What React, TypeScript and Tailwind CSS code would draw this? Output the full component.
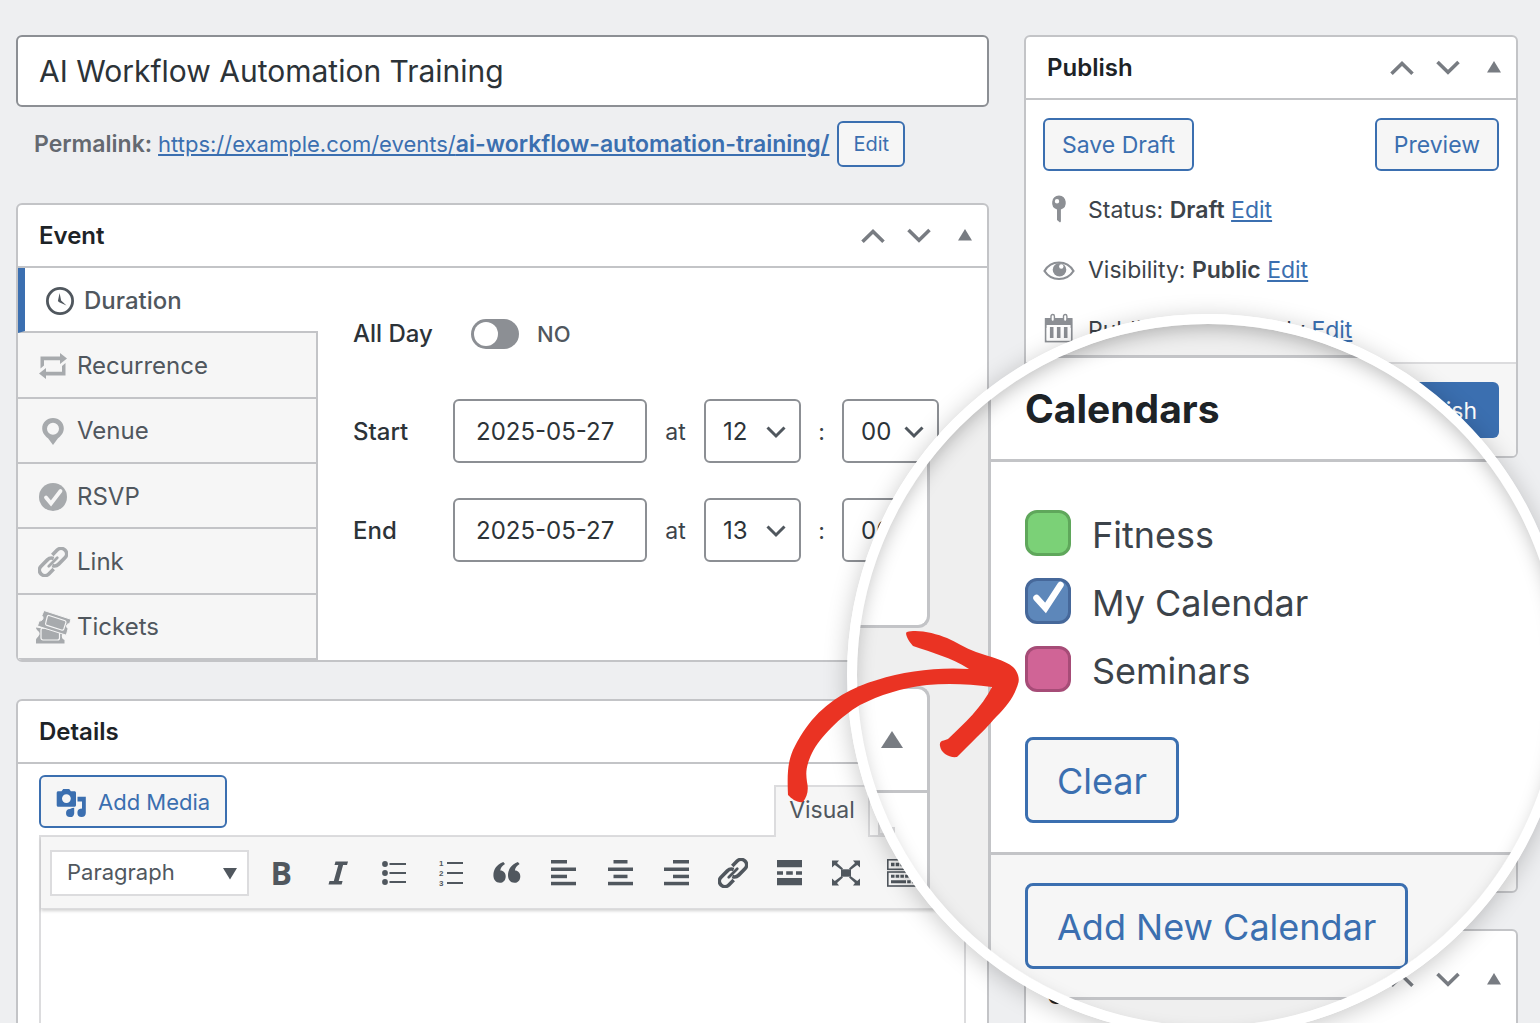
import React, { useState } from "react";

const tabs = [
  { id: "duration", label: "Duration", icon: ClockIcon },
  { id: "recurrence", label: "Recurrence", icon: RecurrenceIcon },
  { id: "venue", label: "Venue", icon: VenueIcon },
  { id: "rsvp", label: "RSVP", icon: RsvpIcon },
  { id: "link", label: "Link", icon: LinkIcon },
  { id: "tickets", label: "Tickets", icon: TicketsIcon },
];

const calendars = [
  { id: "fitness", label: "Fitness", color: "bg-[#7bd177] border-[#5fa75b]", checked: false },
  { id: "my-calendar", label: "My Calendar", color: "bg-[#5d87ba] border-[#46689a]", checked: true },
  { id: "seminars", label: "Seminars", color: "bg-[#d06496] border-[#a64c77]", checked: false },
];

const toolbar = [
  { label: "Bold", icon: <span className="font-['Open_Sans',sans-serif] text-[32px] leading-8 font-bold">B</span> },
  { label: "Italic", icon: <ItalicIcon /> },
  { label: "Bulleted list", icon: <BulletListIcon /> },
  { label: "Numbered list", icon: <NumberListIcon /> },
  { label: "Blockquote", icon: <QuoteIcon /> },
  { label: "Align left", icon: <AlignIcon inset={0} shortWidth={16} /> },
  { label: "Align center", icon: <AlignIcon inset={5.5} shortWidth={14} /> },
  { label: "Align right", icon: <AlignIcon inset={9} shortWidth={16} /> },
  { label: "Insert link", icon: <LinkIcon /> },
  { label: "Read more", icon: <ReadMoreIcon /> },
  { label: "Fullscreen", icon: <FullscreenIcon /> },
  { label: "Toolbar toggle", icon: <KitchenSinkIcon /> },
];

function ClockIcon() {
  return (
    <svg width="28" height="28" viewBox="0 0 28 28">
      <circle cx="14" cy="14" r="12.6" fill="none" stroke="currentColor" strokeWidth="2.8" />
      <path d="M13.6 6l1.5 7.6 5.4 5-7.3-3.3-1.3-1.2z" fill="currentColor" />
    </svg>
  );
}

function RecurrenceIcon() {
  return (
    <svg width="28" height="28" viewBox="0 0 28 28" fill="currentColor">
      <path d="M1.5 4.500H21V1l7 5.500-7 5.500V8.200H5v5.300l-3.500 3zM26.500 11v12.500H7V27l-7-5.500L7 16v3.800h16V14z" />
    </svg>
  );
}

function VenueIcon() {
  return (
    <svg width="28" height="28" viewBox="0 0 28 28" fill="currentColor" fillRule="evenodd">
      <path d="M14 1C8 1 3.200 5.500 3.200 11.500c0 4.500 3 7.500 5.800 9.800L14 28l5-6.700c2.800-2.300 5.800-5.300 5.800-9.800C24.800 5.500 20 1 14 1zm0 4.800a6 6 0 110 12 6 6 0 010-12z" />
    </svg>
  );
}

function RsvpIcon() {
  return (
    <svg width="28" height="28" viewBox="0 0 28 28">
      <circle cx="14" cy="14" r="14" fill="currentColor" />
      <path d="M7 14.500l5 6L21.500 8" fill="none" stroke="#f6f6f6" strokeWidth="3.800" strokeLinecap="round" />
    </svg>
  );
}

function LinkIcon() {
  return (
    <svg width="30" height="30" viewBox="0 0 30 30" fill="none" stroke="currentColor">
      <g transform="rotate(-45 15 15)" strokeWidth="3.600">
        <path d="M18 13C17 10.800 15 9.500 12.500 9.500H3.600a5.500 5.500 0 000 11H10.500" />
        <path d="M12 17C13 19.200 15 20.500 17.500 20.500H26.400a5.500 5.500 0 000-11H19.500" />
        <path d="M9 15h12" strokeLinecap="round" strokeWidth="2.800" />
      </g>
    </svg>
  );
}

function TicketsIcon() {
  return (
    <svg width="36" height="36" viewBox="0 0 36 36">
      <path d="M1 18h2.500M1 18.500c0 3 3.600 3.500 3.600 6S1 29 1 31v3.500h28.500V31c-2-1-2.700-2-2.700-4s1-3 2.700-4z" fill="currentColor" />
      <rect x="6" y="19" width="18.500" height="12" rx="2" fill="none" stroke="#f6f6f6" strokeWidth="1.200" />
      <path d="M9 1.500l27 8.800-1.300 4.200c-3.500.2-4.200 3.300-1.600 5.200l-1.800 6.500L2.500 17l1.600-5c3.600.3 5.200-3.500 2.800-5.500z" fill="currentColor" stroke="#f6f6f6" strokeWidth="1" />
      <path d="M14 6.500l15.500 5c1.200.4 1.700 1.500 1.300 2.500l-2 6c-.4 1-1.300 1.400-2.300 1L12 16.400c-1.200-.4-1.700-1.400-1.300-2.400l1.500-6c.3-1.200 1-1.700 1.800-1.500z" fill="none" stroke="#f6f6f6" strokeWidth="1.200" />
    </svg>
  );
}

function ItalicIcon() {
  return (
    <svg width="24" height="24" viewBox="0 0 24 24" fill="currentColor">
      <path d="M9.500.5H22l-1 3.400h-3.900L12.700 20h3.900l-1 3.500H2.500l1-3.500h4.300L12.300 3.900H8.500z" />
    </svg>
  );
}

function BulletListIcon() {
  return (
    <svg width="26" height="26" viewBox="0 0 26 26" fill="currentColor">
      {[4, 13, 22].map((y) => (
        <g key={y}>
          <circle cx="4" cy={y} r="2.900" />
          <rect x="8.500" y={y - 1} width="16.500" height="2" />
        </g>
      ))}
    </svg>
  );
}

function NumberListIcon() {
  return (
    <svg width="26" height="34" viewBox="0 0 26 34" fill="currentColor">
      {[7, 17, 27].map((y, i) => (
        <g key={y}>
          <text x="1" y={y + 3} fontSize="8" fontWeight="700" fontFamily="Liberation Sans, sans-serif">
            {i + 1}
          </text>
          <rect x="9" y={y - 1} width="16" height="2" />
        </g>
      ))}
    </svg>
  );
}

function QuoteIcon() {
  return (
    <svg width="28" height="24" viewBox="0 0 28 24" fill="currentColor">
      <path d="M12 3C9 4.700 7.500 7.200 7.300 9.600c3.200 0 5.400 2.400 5.400 5.800 0 3.700-2.400 6.400-5.800 6.400-4.200 0-6.500-3.300-6.500-7.500C.4 8.300 3.800 3.500 10.300 1z" />
      <path d="M26.600 3c-3 1.700-4.500 4.200-4.700 6.600 3.200 0 5.400 2.400 5.400 5.800 0 3.700-2.400 6.400-5.800 6.400-4.200 0-6.500-3.300-6.500-7.500 0-6 3.400-10.800 9.900-13.300z" />
    </svg>
  );
}

function AlignIcon({ inset, shortWidth }: { inset: number; shortWidth: number }) {
  return (
    <svg width="25" height="26" viewBox="0 0 25 26" fill="currentColor">
      <rect x={inset} y="0" width={shortWidth} height="3.500" />
      <rect x="0" y="7.500" width="25" height="3.500" />
      <rect x={inset} y="14.700" width={shortWidth} height="3.500" />
      <rect x="0" y="21.800" width="25" height="3.500" />
    </svg>
  );
}

function ReadMoreIcon() {
  return (
    <svg width="25" height="26" viewBox="0 0 25 26" fill="currentColor">
      <path d="M0 0h25v7.200H0zM0 11.300h6v3.500H0zM9.200 11.300h6.600v3.500H9.200zM19 11.300h6v3.500h-6zM0 18h25v7.200H0z" />
    </svg>
  );
}

function FullscreenIcon() {
  return (
    <svg width="28" height="26" viewBox="0 0 28 26" fill="currentColor">
      <path d="M9 9.300h10v7.400H9z" />
      <path d="M0 .5h7L5 2.900l6 5.600-1.500 1.500L2.800 4.900 0 7.500zM28 .5h-7l2 2.400-6 5.600 1.500 1.500 6.700-5.100L28 7.500zM0 25.500h7l-2-2.400 6-5.600L9.500 16l-6.700 5.100L0 18.500zM28 25.500h-7l2-2.400-6-5.600 1.500-1.500 6.700 5.100 2.800-2.600z" />
    </svg>
  );
}

function KitchenSinkIcon() {
  return (
    <svg width="32" height="28" viewBox="0 0 32 28">
      <rect x=".8" y=".8" width="30.400" height="9.500" fill="none" stroke="currentColor" strokeWidth="1.600" />
      <path d="M4 5.500h24" stroke="currentColor" strokeWidth="3.600" strokeDasharray="3.500 1.200" />
      <rect x=".8" y="13" width="30.400" height="14" fill="none" stroke="currentColor" strokeWidth="1.600" />
      <path d="M4 17.200h24" stroke="currentColor" strokeWidth="3" strokeDasharray="3.500 1.200" />
      <path d="M4 22.800h24" stroke="currentColor" strokeWidth="3" strokeDasharray="15 1.200 3.500 1.200" />
    </svg>
  );
}

function MediaIcon() {
  return (
    <svg width="30" height="30" viewBox="0 0 30 30" fill="currentColor" fillRule="evenodd">
      <path d="M5.500 3.200L7.200 1h6l1.700 2.200h3.600c.8 0 1.500.7 1.500 1.500v12.500c0 .8-.7 1.500-1.500 1.500H2.200c-.8 0-1.500-.7-1.500-1.500V4.700c0-.8.7-1.500 1.500-1.500zM10.400 6.200a4.400 4.400 0 100 8.800 4.400 4.400 0 000-8.800z" />
      <path d="M21.500 8.700h8.300V25a4.200 4.200 0 11-4.500-4.400l.7.1V13.500h-4.500zM18.200 19.800v5.700a4.100 4.100 0 11-4.200-4.600c1.300-.8 2.700-1.100 4.200-1.100z" />
    </svg>
  );
}

function PinIcon() {
  return (
    <svg width="32" height="32" viewBox="0 0 32 32" fill="currentColor" fillRule="evenodd">
      <path d="M16 2.500a7.200 7.200 0 00-2 14V27l3 2.500.9-1V16.500a7.200 7.200 0 00-1.900-14zM14 6a2.200 2.200 0 110 4.400A2.200 2.200 0 0114 6z" />
    </svg>
  );
}

function EyeIcon() {
  return (
    <svg width="32" height="32" viewBox="0 0 32 32">
      <path d="M1.500 18C5 12 10 9.500 16 9.500S27 12 30.500 18C27 23.500 22 26 16 26S5 23.500 1.500 18z" fill="none" stroke="currentColor" strokeWidth="2.200" />
      <circle cx="16.500" cy="16.800" r="6.800" fill="currentColor" />
      <circle cx="18.300" cy="13.500" r="2.200" fill="#fff" />
    </svg>
  );
}

function CalendarIcon() {
  return (
    <svg width="32" height="32" viewBox="0 0 32 32">
      <path d="M2 5h27v10H2z" fill="currentColor" />
      <rect x="2.700" y="6" width="26" height="22.500" fill="none" stroke="currentColor" strokeWidth="1.800" />
      <rect x="3.600" y="12" width="24" height="15.500" fill="#fff" />
      <path d="M8.700 14v11M15.700 14v11M22.700 14v11" stroke="currentColor" strokeWidth="3.600" />
      <rect x="8" y="1.500" width="3.400" height="7" rx="1.700" fill="#fff" stroke="currentColor" strokeWidth="1.400" />
      <rect x="20.500" y="1.500" width="3.400" height="7" rx="1.700" fill="#fff" stroke="currentColor" strokeWidth="1.400" />
    </svg>
  );
}

function PanelActions() {
  return (
    <div className="flex items-center gap-[22px] text-[#787c82]">
      <button type="button" aria-label="Move up">
        <svg width="24" height="16" viewBox="0 0 24 16" fill="none" stroke="currentColor" strokeWidth="3.600">
          <path d="M1.500 13.700L12 3.500l10.500 10.200" />
        </svg>
      </button>
      <button type="button" aria-label="Move down">
        <svg width="24" height="16" viewBox="0 0 24 16" fill="none" stroke="currentColor" strokeWidth="3.600">
          <path d="M1.500 2l10.500 10.200L22.500 2" />
        </svg>
      </button>
      <button type="button" aria-label="Toggle panel" className="pl-[5px]">
        <svg width="14" height="16" viewBox="0 0 14 16" fill="currentColor">
          <path d="M7 1l7 11.500H0z" />
        </svg>
      </button>
    </div>
  );
}

function Panel({ title, children, tall = false }: { title: React.ReactNode; children?: React.ReactNode; tall?: boolean }) {
  return (
    <section className="overflow-hidden rounded-md border-2 border-[#c3c4c7] bg-white">
      <header className={`flex items-center justify-between border-b-2 border-[#c3c4c7] pr-[15px] pl-[21px] ${tall ? "h-[100px]" : "h-[63px]"}`}>
        <h2 className="text-2xl leading-8 font-semibold text-[#1d2327]">{title}</h2>
        <PanelActions />
      </header>
      {children}
    </section>
  );
}

function TimeSelect({ label, value, max }: { label: string; value: string; max: number }) {
  const options = Array.from({ length: max }, (_, i) => String(i).padStart(2, "0"));

  return (
    <div className="relative w-[97px]">
      <select
        aria-label={label}
        defaultValue={value}
        className="h-16 w-full appearance-none rounded-md border-2 border-[#8c8f94] bg-white pt-[2px] pl-[17px] text-2xl text-[#2c3338]"
      >
        {options.map((o) => (
          <option key={o}>{o}</option>
        ))}
      </select>
      <svg className="pointer-events-none absolute top-[27px] right-[15px]" width="20" height="13" viewBox="0 0 20 13" fill="none" stroke="#50575e" strokeWidth="3">
        <path d="M1.500 1.500L10 10l8.500-8.500" />
      </svg>
    </div>
  );
}

function DateRow({ id, label, hour }: { id: string; label: string; hour: string }) {
  return (
    <div className="flex items-center text-2xl">
      <label htmlFor={id} className="w-[100px] pt-[2px] font-medium text-[#2c3338]">
        {label}
      </label>
      <input id={id} defaultValue="2025-05-27" className="h-16 w-[194px] rounded-md border-2 border-[#8c8f94] bg-white px-[21px] text-[#2c3338]" />
      <span className="w-[57px] pt-[2px] text-center text-[23px] text-[#3c434a]">at</span>
      <TimeSelect label={`${label} hour`} value={hour} max={24} />
      <span className="w-[41px] pt-[2px] text-center text-[23px] text-[#3c434a]">:</span>
      <TimeSelect label={`${label} minute`} value="00" max={60} />
    </div>
  );
}

function EventPanel() {
  const [active, setActive] = useState("duration");

  return (
    <Panel title="Event">
      <div className="flex h-[392px]">
        <nav className="flex w-[300px] shrink-0 flex-col">
          {tabs.map(({ id, label, icon: Icon }) => (
            <button
              key={id}
              type="button"
              onClick={() => setActive(id)}
              className={`flex flex-1 items-center border-b-2 border-[#c3c4c7] pt-[2px] text-left text-2xl text-[#50575e] ${
                active === id ? "border-l-[7px] border-l-[#3b6fb0] bg-white pl-[17px] font-medium" : "border-r-2 bg-[#f6f6f6] pl-[17px]"
              }`}
            >
              <span className={`mr-[6px] flex w-9 justify-center ${active === id ? "text-[#50575e]" : "text-[#a7aaad]"}`}>
                <Icon />
              </span>
              {label}
            </button>
          ))}
        </nav>
        <div className="flex flex-col pt-[51px] pl-[35px]">
          <div className="mb-[50px] flex h-[30px] items-center">
            <label htmlFor="all-day" className="w-[118px] text-2xl font-medium text-[#2c3338]">
              All Day
            </label>
            <input
              id="all-day"
              type="checkbox"
              role="switch"
              className="h-[30px] w-12 appearance-none rounded-full bg-[#8c8f94] before:m-[3px] before:block before:size-6 before:rounded-full before:bg-white checked:bg-[#3b6fb0] checked:before:ml-[21px]"
            />
            <span className="ml-[18px] text-[22px] font-medium text-[#50575e]">NO</span>
          </div>
          <div className="flex flex-col gap-[35px]">
            <DateRow id="start-date" label="Start" hour="12" />
            <DateRow id="end-date" label="End" hour="13" />
          </div>
        </div>
      </div>
    </Panel>
  );
}

function DetailsPanel() {
  return (
    <Panel title="Details">
      <div className="px-[21px] pt-[11px]">
        <div className="flex h-[60px] items-start justify-between">
          <button type="button" className="flex h-[53px] items-center gap-3 rounded-md border-2 border-[#3b6fb0] bg-[#f6f6f6] px-[15px] pt-[2px] text-[22px] text-[#3b6fb0]">
            <MediaIcon />
            Add Media
          </button>
          <div className="relative z-10 flex gap-2 pt-[10px]">
            <button type="button" className="h-[52px] w-24 border-2 border-b-0 border-[#dcdcde] bg-[#f6f6f6] pb-1 text-[23px] text-[#50575e]">
              Visual
            </button>
            <button type="button" className="h-[50px] w-[88px] border-2 border-[#dcdcde] bg-[#f0f0f1] text-[23px] text-[#646970]">
              Code
            </button>
          </div>
        </div>
        <div className="border-2 border-[#dcdcde]">
          <div className="relative flex h-[72px] items-center border-b border-[#dcdcde] bg-[#f6f6f6] pl-[9px] text-[#50575e] shadow-[0_2px_3px_rgba(0,0,0,0.18)]">
            <div className="relative mr-1 w-[199px] shrink-0">
              <select aria-label="Text format" className="h-[46px] w-full appearance-none border-2 border-[#dcdcde] bg-white pl-[15px] text-[22px]">
                <option>Paragraph</option>
                <option>Heading 1</option>
                <option>Heading 2</option>
              </select>
              <svg className="pointer-events-none absolute top-[18px] right-3" width="14" height="12" viewBox="0 0 14 12" fill="currentColor">
                <path d="M0 0h14L7 11.500z" />
              </svg>
            </div>
            <div className="grid w-[678px] shrink-0 grid-cols-12">
              {toolbar.map((item) => (
                <button key={item.label} type="button" aria-label={item.label} className="flex h-9 items-center justify-center">
                  {item.icon}
                </button>
              ))}
            </div>
          </div>
          <textarea aria-label="Event details" className="block h-[400px] w-full resize-none bg-white" />
        </div>
      </div>
    </Panel>
  );
}

function PublishPanel() {
  const rows = [
    { label: "Status:", value: "Draft", icon: <PinIcon /> },
    { label: "Visibility:", value: "Public", icon: <EyeIcon /> },
    { label: "Publish", value: "immediately", icon: <CalendarIcon />, light: true },
  ];

  return (
    <Panel title="Publish">
      <div className="h-[262px] px-[17px] pt-[18px]">
        <div className="mb-[8px] flex justify-between text-[23px] text-[#3b6fb0]">
          <button type="button" className="h-[53px] rounded-md border-2 border-[#3b6fb0] bg-[#f6f6f6] px-[17px] pt-[2px]">
            Save Draft
          </button>
          <button type="button" className="h-[53px] rounded-md border-2 border-[#3b6fb0] bg-[#f6f6f6] px-[17px] pt-[2px]">
            Preview
          </button>
        </div>
        {rows.map((row) => (
          <div key={row.label} className="flex h-[60px] items-center text-[23px] text-[#3c434a]">
            <span className="mr-[13px] text-[#8c8f94]">{row.icon}</span>
            <p className="pt-[2px]">
              {row.label} <span className={row.light ? "" : "font-semibold"}>{row.value}</span>{" "}
              <a href="#edit" className="text-[#3b6fb0] underline">
                Edit
              </a>
            </p>
          </div>
        ))}
      </div>
      <div className="flex h-[94px] items-center justify-end border-t-2 border-[#dcdcde] bg-[#f6f6f6] pr-[17px]">
        <button type="button" className="h-14 rounded-md bg-[#3b6fb0] px-[22px] pt-[2px] text-[23px] text-white">
          Publish
        </button>
      </div>
    </Panel>
  );
}

// Enlarged view of the calendars box, laid over the sidebar
function CalendarsLens() {
  return (
    <div className="absolute top-[279px] left-[-177px] size-[722px] overflow-hidden rounded-full border-[10px] border-white bg-[#efefef]">
      <div className="flex h-full">
        <div className="flex w-[73px] shrink-0 flex-col">
          <div className="h-[304px] rounded-br-xl border-r-[3px] border-b-[3px] border-[#c3c4c7] bg-white" />
          <div className="mt-[58px] flex-1 rounded-tr-xl border-t-[3px] border-r-[3px] border-[#c3c4c7] bg-white">
            <div className="flex h-[104px] items-center justify-center border-b-[3px] border-[#c3c4c7]">
              <svg width="22" height="17" viewBox="0 0 22 17" fill="#787c82">
                <path d="M11 0l11 17H0z" />
              </svg>
            </div>
            <div className="mt-[34px] h-[60px] w-[38px] border-r-[3px] border-[#dcdcde]" />
          </div>
        </div>
        <div className="mt-[31px] ml-[58px] flex h-[645px] flex-1 flex-col border-[3px] border-r-0 border-[#c3c4c7] bg-white">
          <h2 className="flex h-[104px] items-center border-b-[3px] border-[#c3c4c7] pt-[2px] pl-[34px] text-[39px] font-bold text-[#1d2327]">
            Calendars
          </h2>
          <div className="flex-1 pt-[48px] pl-[34px]">
            <div className="mb-[45px] flex flex-col gap-[22px]">
              {calendars.map((cal) => (
                <label key={cal.id} className="flex h-[46px] items-center gap-[21px] text-[36px] text-[#3c434a]">
                  <span className="relative size-[46px] shrink-0">
                    <input type="checkbox" defaultChecked={cal.checked} className={`peer block size-[46px] appearance-none rounded-xl border-[3px] ${cal.color}`} />
                    <svg className="pointer-events-none absolute inset-0 hidden peer-checked:block" width="46" height="46" viewBox="0 0 46 46" fill="none" stroke="#fff" strokeWidth="6.500" strokeLinecap="round">
                      <path d="M11.500 20L20.500 30 35.500 7" />
                    </svg>
                  </span>
                  <span className="pt-1">{cal.label}</span>
                </label>
              ))}
            </div>
            <button type="button" className="h-[86px] rounded-lg border-[3px] border-[#3b6fb0] bg-[#f6f6f6] px-[29px] pt-[2px] text-[36px] text-[#3b6fb0]">
              Clear
            </button>
          </div>
          <div className="h-[145px] border-t-[3px] border-[#c3c4c7] bg-[#f6f6f6] pt-[28px] pl-[34px]">
            <button type="button" className="h-[86px] rounded-lg border-[3px] border-[#3b6fb0] bg-[#f6f6f6] px-[29px] pt-[2px] text-[36px] text-[#3b6fb0]">
              Add New Calendar
            </button>
          </div>
        </div>
      </div>
      <div className="pointer-events-none absolute inset-0 rounded-full shadow-[inset_0_8px_20px_-4px_rgba(0,0,0,0.28)]" />
    </div>
  );
}

function LensArrow() {
  return (
    <svg className="pointer-events-none absolute top-[593px] left-[-238px]" width="236" height="178" viewBox="786 628 236 178" fill="#ea3323">
      <path d="M788 795C787 772 788 762 793 750C799 738 803 731 812 720C830 699 853 687 877 680C905 671 938 667 969 669C950 657 933 653 913 646C909 642 904 633 907 632C917 629 935 633 947 638C956 642 965 648 976 652C990 657 1005 660 1013 667C1018 672 1020 679 1018 684C1014 697 1008 704 1000 713C990 723 986 729 977 737C969 745 963 751 957 757C949 758 941 753 940 746C939 740 944 741 948 739C964 724 982 707 992 687C970 684 948 683 927 685C901 688 880 695 860 705C841 716 820 737 812 753C805 768 806 774 807 782C809 790 807 797 803 802C797 803 792 799 788 795Z" />
    </svg>
  );
}

export default function App() {
  return (
    <div className="h-screen overflow-hidden bg-[#eeeff1] pt-[35px] pr-[22px] pl-4 font-[Inter,sans-serif]">
      <div className="flex items-start gap-[35px]">
        <main className="min-w-0 flex-1">
          <input
            aria-label="Event title"
            defaultValue="AI Workflow Automation Training"
            className="h-[72px] w-full rounded-md border-2 border-[#8c8f94] bg-white px-[21px] text-[30px] text-[#2c3338]"
          />
          <div className="mt-[14px] mb-[36px] flex h-[46px] items-center pl-[18px] text-[23px] whitespace-nowrap">
            <span className="mr-[6px] font-semibold text-[#646970]">Permalink:</span>
            <a href="#permalink" className="text-[22px] text-[#3b6fb0] underline">
              https://example.com/events/<span className="text-[23px] font-semibold">ai-workflow-automation-training/</span>
            </a>
            <button type="button" className="ml-[8px] h-[46px] rounded-md border-2 border-[#3b6fb0] bg-[#f6f6f6] px-[14px] text-[20px] text-[#3b6fb0]">
              Edit
            </button>
          </div>
          <div className="flex flex-col gap-[37px]">
            <EventPanel />
            <DetailsPanel />
          </div>
        </main>

        <aside className="relative z-20 w-[494px] shrink-0">
          <div className="flex flex-col gap-[36px]">
            <PublishPanel />
            <div className="h-[399px] rounded-md border-2 border-[#c3c4c7] bg-[#f6f6f6]" />
            <Panel title={<>Calendar<br />Colors</>} tall />
          </div>
          <div className="absolute top-[279px] left-[-177px] size-[722px] rounded-full shadow-[0_4px_24px_rgba(0,0,0,0.22)]" />
          <CalendarsLens />
          <LensArrow />
        </aside>
      </div>
    </div>
  );
}
